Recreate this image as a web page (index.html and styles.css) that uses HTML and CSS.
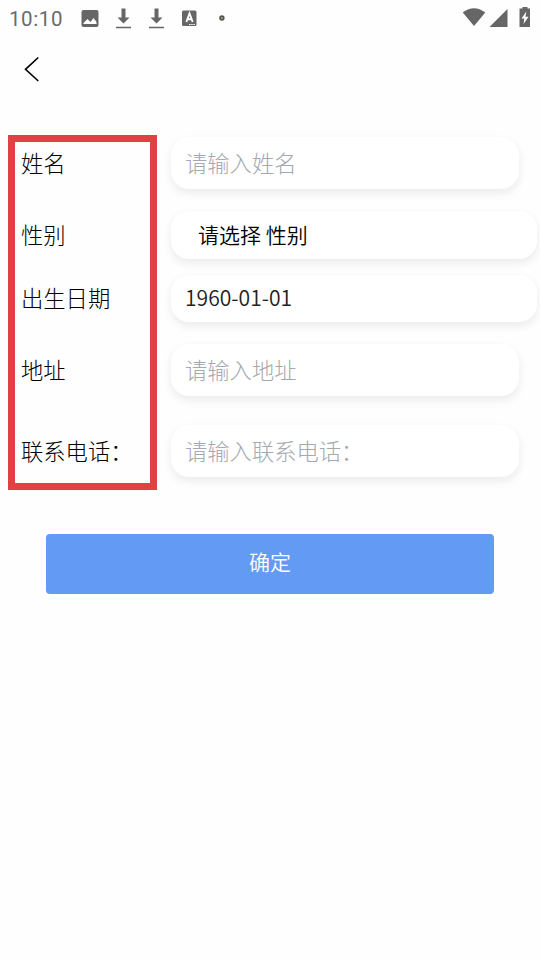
FILE: index.html
```html
<!DOCTYPE html>
<html lang="zh-CN">
<head>
<meta charset="utf-8">
<title>个人信息</title>
<link rel="stylesheet" href="styles.css">
</head>
<body>
<header class="status">
  <span class="time">10:10</span>
  <svg class="notifications" width="150" height="36" viewBox="0 0 150 36" fill="#666">
    <path fill-rule="evenodd" d="M6.500 10h13q2 0 2 2v13q0 2-2 2h-13q-2 0-2-2V12q0-2 2-2zM6.500 24h13v-2l-3-4-3 4-3-3-4 4z"/>
    <path d="M44.500 8.500h4v9h4l-6 6-6-6h4zM39 26.700h15v1.500H39z"/>
    <path d="M77.500 8.500h4v9h4l-6 6-6-6h4zM72 26.700h15v1.500H72z"/>
    <rect x="105" y="10.500" width="14.500" height="15.500" rx="1.500"/>
    <path d="M109.300 22l3.200-8.500 3.200 8.500M110.500 19.300h4" fill="none" stroke="#fff" stroke-width="1.900"/>
    <path d="M112 24.500h6" stroke="#fff" stroke-dasharray="1.500 .7"/>
    <circle cx="144.900" cy="18" r="2.700" fill="#555"/>
    <circle cx="144.900" cy="18" r="1" fill="#b9a36b"/>
  </svg>
  <svg class="system" width="70" height="36" viewBox="0 0 70 36" fill="#666">
    <path d="M-.3 12.500Q11 3.900 22.300 12.500L11 26z"/>
    <path d="M44.500 9v18H26.500z"/>
    <path d="M59.500 7h5v1.500h2.500V27H56.500V8.500h3z"/>
    <path d="M63.300 11.500l-4.800 7h2.800l-.8 5.500 5-7.300h-3z" fill="#fff"/>
  </svg>
</header>
<nav class="nav">
  <svg width="20" height="28" viewBox="0 0 20 28"><path d="M15.300 2.500L2.500 14.300 15.300 26" fill="none" stroke="#000" stroke-width="1.600"/></svg>
</nav>
<main class="form">
  <div class="row tall"><span class="label">姓名</span><div class="field hint">请输入姓名</div></div>
  <div class="row wide gender"><span class="label">性别</span><div class="field picker">请选择 性别</div></div>
  <div class="row wide birth"><span class="label">出生日期</span><div class="field date">1960-01-01</div></div>
  <div class="row tall address"><span class="label">地址</span><div class="field hint">请输入地址</div></div>
  <div class="row tall phone"><span class="label">联系电话：</span><div class="field hint">请输入联系电话：</div></div>
  <button class="submit" type="button">确定</button>
  <div class="highlight"></div>
</main>
</body>
</html>
```
FILE: styles.css
```css
* { box-sizing: border-box; }
body {
  margin: 0;
  min-height: 960px;
  overflow: hidden;
  background: #fefefe;
  font-family: "Noto Sans CJK SC", sans-serif;
  color: #000;
}
.status { display: flex; height: 36px; padding-left: 9px; align-items: center; }
.time { width: 68px; font: 400 20.5px/36px Roboto, sans-serif; letter-spacing: .6px; color: #6a6a6a; padding-top: 1px; }
.system { margin-left: 236px; }
.nav { height: 101px; padding: 19px 0 0 23px; }
.nav svg { display: block; }
.form { position: relative; }
.row { display: flex; align-items: center; height: 47px; font-size: 22.300px; font-weight: 300; margin-bottom: 16px; }
.tall { height: 52px; margin-bottom: 22px; }
.gender { height: 48px; }
.address { margin: 22px 0 29px; }
.phone { margin-bottom: 57px; }
.label { width: 150px; margin-left: 21px; padding-bottom: 2px; white-space: nowrap; }
.birth .label { padding-bottom: 3px; }
.field {
  display: flex;
  align-items: center;
  width: 348px;
  height: 100%;
  padding: 0 0 2px 14px;
  border-radius: 18px;
  background: #fff;
  box-shadow: 0 4px 10px rgba(0, 0, 0, .08);
}
.wide .field { width: 366px; }
.hint { color: #a4a8b0; }
.picker { padding-left: 27px; font-size: 21px; font-weight: 350; white-space: pre; }
.date { padding-bottom: 3px; font-size: 21.100px; font-weight: 350; color: #222; }
.submit {
  display: block;
  width: 448px;
  height: 60px;
  margin: 0 auto;
  padding: 0 0 6px;
  border: 0;
  border-radius: 4px;
  background: #629af4;
  color: #fff;
  font: 350 21px "Noto Sans CJK SC", sans-serif;
}
.highlight {
  position: absolute;
  left: 8px;
  top: -2px;
  width: 149px;
  height: 355px;
  border: 7px solid #e24143;
  pointer-events: none;
}
```
